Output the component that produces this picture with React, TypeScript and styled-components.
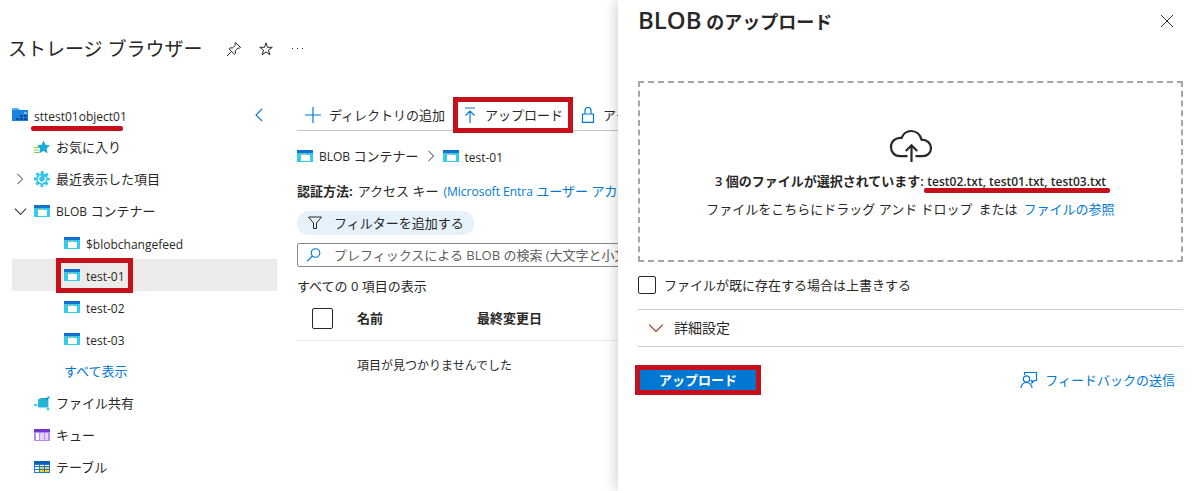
import React from "react";
import styled, { createGlobalStyle, css } from "styled-components";

const ink = "#292827";
const link = "#0078d4";
const marker = "#c50f1a";

const GlobalStyle = createGlobalStyle`
  *, *::before, *::after { box-sizing: border-box; }
  html, body, #root { min-height: 100vh; }
  body {
    margin: 0;
    background: #fff;
    color: ${ink};
    font: 13px/20px "Open Sans", "Noto Sans CJK JP", sans-serif;
  }
  button, input { font: inherit; color: inherit; }
  svg { display: block; flex: none; }
`;

const Shell = styled.div`
  display: flex;
  min-height: 100vh;
  overflow: hidden;
`;

const Page = styled.div`
  flex: 1;
  min-width: 0;
  overflow: hidden;
`;

const PageHeader = styled.header`
  display: flex;
  align-items: center;
  height: 99px;
  padding: 0 8px 2px;
  gap: 16px;
`;

const PageTitle = styled.h1`
  margin: 0 7px 0 0;
  font-size: 19px;
  font-weight: 400;
  line-height: 32px;
  white-space: nowrap;
`;

const IconButton = styled.button`
  display: flex;
  align-items: center;
  justify-content: center;
  width: 16px;
  height: 16px;
  padding: 0;
  border: 0;
  background: none;
  color: ${ink};
`;

const Latin = styled.span`
  position: relative;
  font-size: 12px;
`;

const ItemName = styled(Latin)`
  padding-top: 3px;
`;

const Columns = styled.div`
  display: flex;
  gap: 20px;
  padding-left: 12px;
`;

const Tree = styled.nav`
  flex: none;
  width: 265px;
`;

const TreeList = styled.ul`
  margin: 0;
  padding: 0;
  list-style: none;
`;

const TreeRow = styled.li<{ $level: number; $selected?: boolean }>`
  display: flex;
  align-items: center;
  gap: 6px;
  height: 32px;
  padding-left: ${(p) => (p.$level === 2 ? 52 : 0)}px;
  padding-right: 9px;
  white-space: nowrap;
  ${(p) => p.$selected && css`background: #edebe9;`}
`;

const Expander = styled.span`
  display: flex;
  justify-content: center;
  width: 16px;
`;

const Collapse = styled(IconButton)`
  margin-left: auto;
  color: ${link};
`;

const Link = styled.a`
  color: ${link};
  text-decoration: none;
`;

const MarkedItem = styled.span`
  position: relative;
  display: flex;
  align-items: center;
  gap: 6px;
`;

const MarkBox = styled.span<{ $wide?: boolean }>`
  position: absolute;
  inset: ${(p) => (p.$wide ? "-8px -10px" : "-6px -8px")};
  border: 5px solid ${marker};
  pointer-events: none;
`;

const Underline = styled.span<{ $right: number; $drop: number }>`
  position: absolute;
  left: -3px;
  right: ${(p) => p.$right}px;
  bottom: ${(p) => -p.$drop}px;
  height: 5px;
  border-radius: 2px;
  background: ${marker};
`;

const Content = styled.main`
  flex: 1;
  min-width: 0;
  white-space: nowrap;
`;

const Toolbar = styled.div`
  display: flex;
  align-items: center;
  gap: 18px;
  height: 32px;
  padding-left: 8px;
  border-bottom: 1px solid #c8c6c4;
`;

const ToolButton = styled.button`
  position: relative;
  display: flex;
  flex: none;
  align-items: center;
  gap: 8px;
  padding: 0;
  border: 0;
  background: none;
`;

const Breadcrumb = styled.div`
  display: flex;
  align-items: center;
  gap: 6px;
  height: 50px;
`;

const AuthLine = styled.p`
  display: flex;
  gap: 5px;
  margin: 0;
  height: 30px;
`;

const FilterButton = styled.button`
  display: flex;
  align-items: center;
  gap: 11px;
  height: 24px;
  padding: 0 10px;
  border: 0;
  border-radius: 12px;
  background: #e5f1fb;
`;

const SearchBox = styled.label`
  display: flex;
  align-items: center;
  gap: 12px;
  width: 420px;
  height: 24px;
  margin: 8px 0;
  padding-left: 8px;
  border: 1px solid #8a8886;
  border-radius: 2px;
`;

const SearchInput = styled.input`
  flex: 1;
  min-width: 0;
  height: 20px;
  padding: 0;
  border: 0;
  outline: 0;
  background: none;
  &::placeholder { color: #605e5c; opacity: 1; }
`;

const Count = styled.p`
  margin: 0;
  line-height: 22px;
`;

const Table = styled.table`
  width: 100%;
  border-collapse: collapse;
  table-layout: fixed;
  th, td { padding: 0; text-align: left; }
  thead th { height: 43px; font-weight: 600; border-bottom: 1px solid #edebe9; }
  tbody td { height: 51px; font-size: 12px; }
`;

const CheckCol = styled.col`width: 60px;`;
const NameCol = styled.col`width: 120px;`;

const Check = styled.input<{ $size: number }>`
  appearance: none;
  display: block;
  flex: none;
  width: ${(p) => p.$size}px;
  height: ${(p) => p.$size}px;
  margin: 0;
  border: 1px solid ${ink};
  border-radius: 2px;
  background: #fff;
`;

const HeaderCheck = styled(Check)`
  margin-left: 15px;
`;

const Panel = styled.aside`
  position: relative;
  flex: none;
  width: 574px;
  padding: 0 9px 0 20px;
  background: #fff;
  box-shadow: 0 0 14px rgba(0, 0, 0, 0.24);
`;

const PanelHeader = styled.header`
  display: flex;
  align-items: center;
  justify-content: space-between;
  height: 41px;
  padding-right: 8px;
`;

const PanelTitle = styled.h2`
  margin: 0;
  font-size: 18px;
  font-weight: 600;
  line-height: 32px;
`;

const ProductName = styled.span`
  font-size: 24px;
`;

const DropZone = styled.section`
  display: flex;
  flex-direction: column;
  align-items: center;
  height: 181px;
  margin-top: 40px;
  padding-top: 45px;
  border: 2px dashed #a6a6a6;
  white-space: nowrap;
`;

const Selected = styled.p`
  margin: 7px 0;
  font-weight: 600;
`;

const DropHint = styled.p`
  display: flex;
  gap: 6px;
  margin: 0;
`;

const Overwrite = styled.label`
  display: flex;
  align-items: center;
  gap: 8px;
  height: 47px;
  padding-bottom: 2px;
`;

const Advanced = styled.button`
  display: flex;
  align-items: center;
  gap: 10px;
  width: 100%;
  height: 38px;
  padding: 0 10px;
  border: solid #d2d0ce;
  border-width: 1px 0;
  background: none;
  font-size: 14px;
`;

const PanelFooter = styled.footer`
  display: flex;
  align-items: center;
  justify-content: space-between;
  margin-top: 23px;
  padding: 0 8px 0 2px;
`;

const Submit = styled.button`
  width: 116px;
  height: 20px;
  padding: 0;
  border: 0;
  outline: 5px solid ${marker};
  background: ${link};
  color: #fff;
  font-weight: 600;
  line-height: 20px;
`;

const Feedback = styled(Link)`
  display: flex;
  align-items: center;
  gap: 7px;
`;

type ChevronProps = { d: "left" | "right" | "down"; size: number; color?: string };

const Chevron = ({ d, size, color = "currentColor" }: ChevronProps) => {
  const path = { left: "M9 1 3 7l6 6", right: "M4 1l6 6-6 6", down: "M1 4l6 6 6-6" }[d];
  return (
    <svg width={size} height={size} viewBox="0 0 14 14" fill="none" stroke={color} strokeWidth="1.1">
      <path d={path} />
    </svg>
  );
};

const ContainerIcon = () => (
  <svg width="16" height="16" viewBox="0 0 16 16">
    <path fill="#35cdee" d="M0 2h16v12H0z" />
    <path fill="#0f74d0" d="M0 2h16v3H0z" />
    <path fill="#fff" d="M4 6h4l1 1h4v6H4z" />
    <path fill="#f5a45a" d="M4 6h4v1H4z" />
  </svg>
);

const StorageIcon = () => (
  <svg width="16" height="16" viewBox="0 0 16 16">
    <path fill="#50b5f0" d="M0 1h6l2 2h8v3H0z" />
    <path fill="#1b83df" d="M0 3h16v11H0z" />
    <path fill="#0a4a96" d="M4 11h3v2H4zM8 11h3v2H8zM12 11h3v2h-3zM8 8h3v2H8z" />
    <path fill="#6cc4f5" d="M12 5h3v2h-3z" />
    <path fill="#0a4a96" d="M12 8h3v2h-3z" />
  </svg>
);

const FavoriteIcon = () => (
  <svg width="16" height="16" viewBox="0 0 16 16">
    <path stroke="#86c93c" d="M0 8.500h5M0 11h5M0 13.500h5" />
    <path fill="#1eaad6" d="m9.500 1.500 2 4.200 4.500.6-3.300 3.200.8 4.700-4-2.200-4.200 2.200.8-4.700L3 6.300l4.500-.6z" />
  </svg>
);

const RecentIcon = () => (
  <svg width="16" height="16" viewBox="0 0 16 16" fill="none">
    <circle cx="8" cy="8" r="6.600" stroke="#32bfe8" strokeWidth="2.600" strokeDasharray="2.700 2.484" strokeDashoffset="1.350" />
    <circle cx="8" cy="8" r="5.900" fill="#32c5ec" />
    <path d="M5.200 5.800a3.500 3.500 0 1 0 5.800.2M5 5.200h2" stroke="#fff" strokeWidth="1.300" />
  </svg>
);

const ShareIcon = () => (
  <svg width="16" height="16" viewBox="0 0 16 16">
    <path stroke="#50d0f0" d="M2 10h4M14 3v10" />
    <path fill="#27b4d8" d="M4 5q0-1 1-1l2-1h6q1 0 1 1v7q0 1.500-1.500 1.500h-7Q4 12.500 4 11z" />
    <path fill="#1680b0" d="M8 3h6v3l-2-2z" />
    <g fill="#40cdf2">
      <circle cx="1.500" cy="10" r="1.500" />
      <circle cx="14.500" cy="2.500" r="1.500" />
      <circle cx="14" cy="14" r="1.500" />
    </g>
  </svg>
);

const QueueIcon = () => (
  <svg width="16" height="16" viewBox="0 0 16 16">
    <path fill="#b58af5" d="M0 2h16v12H0z" />
    <path fill="#7434d0" d="M0 2h16v3H0z" />
    <path fill="#fff" d="M2 6h3v7H2z" />
    <path fill="#e3d2fd" d="M6 6h4v7H6zM11 6h3v7h-3z" />
  </svg>
);

const TableIcon = () => (
  <svg width="16" height="16" viewBox="0 0 16 16">
    <path fill="#187cd6" d="M0 2h16v12H0z" />
    <path fill="#0a62b8" d="M0 2h16v3H0z" />
    <path fill="#fff" d="M1 6h4v1H1zM6 6h4v1H6zM11 6h4v1h-4zM1 8h4v2H1zM1 11h4v2H1z" />
    <path fill="#f5d52c" d="M6 8h4v2H6zM11 8h4v2h-4zM6 11h4v2H6zM11 11h4v2h-4z" />
  </svg>
);

const PinIcon = () => (
  <svg width="16" height="16" viewBox="0 0 16 16" fill="none" stroke="currentColor">
    <path d="m9.500 1.500 5 5-1.200.7-1.300-.2-2.800 2.800.3 2.500-1 1L3 7.800l1-1 2.500.3L9.200 4.300 9 3zM5.500 10.500 1 15" />
  </svg>
);

const StarIcon = () => (
  <svg width="16" height="16" viewBox="0 0 16 16" fill="none" stroke="currentColor">
    <path d="m8 1.800 1.500 4.500h4.800l-3.900 2.900 1.500 4.600L8 11l-3.900 2.800 1.500-4.600-3.900-2.900h4.800z" />
  </svg>
);

const MoreIcon = () => (
  <svg width="16" height="16" viewBox="0 0 16 16" fill="currentColor">
    <path d="M2 7h1v1H2zM7 7h1v1H7zM12 7h1v1h-1z" />
  </svg>
);

const PlusIcon = () => (
  <svg width="16" height="16" viewBox="0 0 16 16" stroke={link} strokeWidth="1.200">
    <path d="M8 0v16M0 8h16" />
  </svg>
);

const UploadIcon = () => (
  <svg width="14" height="16" viewBox="0 0 14 16" fill="none" stroke={link} strokeWidth="1.200">
    <path d="M2 1h10M7 16V4M2.500 8.500 7 4l4.500 4.500" />
  </svg>
);

const LockIcon = () => (
  <svg width="14" height="16" viewBox="0 0 14 16" fill="none" stroke={link} strokeWidth="1.200">
    <path d="M1.500 7h11v8.400h-11zM4 7V3.500a3 3 0 0 1 6 0V7" />
  </svg>
);

const FilterIcon = () => (
  <svg width="16" height="16" viewBox="0 0 16 16" fill="none" stroke={ink}>
    <path d="M1.500 2h13l-5 6v5.500h-3V8z" />
  </svg>
);

const SearchIcon = () => (
  <svg width="16" height="16" viewBox="0 0 16 16" fill="none" stroke={link} strokeWidth="1.100">
    <circle cx="9.500" cy="6" r="4.300" />
    <path d="M6.400 9 1 14.400" />
  </svg>
);

const CloseIcon = () => (
  <svg width="14" height="14" viewBox="0 0 14 14" stroke={ink}>
    <path d="m1 1 12 12M13 1 1 13" />
  </svg>
);

const CloudIcon = () => (
  <svg width="44" height="36" viewBox="0 0 44 36" fill="none" stroke={ink} strokeWidth="2.200">
    <path d="M18.500 28.200H11C5 28.200 2 23.500 2 19c0-5.500 4.500-9.700 10.500-9C14.500 5.200 18 3 22.200 3c5 0 9 3.500 10.300 8.700 5.700 0 9.500 3.600 9.500 8.300s-3.500 8.200-8.500 8.200h-7" />
    <path d="M22.500 34V17.500M16.800 23l5.700-5.700 5.700 5.700" />
  </svg>
);

const FeedbackIcon = () => (
  <svg width="18" height="18" viewBox="0 0 18 18" fill="none" stroke={link} strokeWidth="1.200">
    <path d="M4.500 4V1.500h12v8h-2l-2.500 2.300V9.500h-1.500" />
    <circle cx="6.500" cy="8" r="3.200" />
    <path d="M1 17a5.500 5.500 0 0 1 11 0" />
  </svg>
);

type BranchProps = { icon: React.ReactNode; children: React.ReactNode; open?: "right" | "down" };

const Branch = ({ icon, children, open }: BranchProps) => (
  <TreeRow $level={1}>
    <Expander>{open && <Chevron d={open} size={open === "down" ? 13 : 12} />}</Expander>
    {icon}
    <span>{children}</span>
  </TreeRow>
);

const Leaf = ({ label, selected }: { label: string; selected?: boolean }) => (
  <TreeRow $level={2} $selected={selected}>
    <MarkedItem>
      <ContainerIcon />
      <ItemName>{label}</ItemName>
      {selected && <MarkBox />}
    </MarkedItem>
  </TreeRow>
);

export default function App() {
  return (
    <Shell>
      <GlobalStyle />
      <Page>
        <PageHeader>
          <PageTitle>ストレージ ブラウザー</PageTitle>
          <IconButton aria-label="ピン留め"><PinIcon /></IconButton>
          <IconButton aria-label="お気に入りに追加"><StarIcon /></IconButton>
          <IconButton aria-label="その他"><MoreIcon /></IconButton>
        </PageHeader>
        <Columns>
          <Tree>
            <TreeList>
              <TreeRow $level={0}>
                <StorageIcon />
                <ItemName>sttest01object01<Underline $right={4} $drop={4} /></ItemName>
                <Collapse aria-label="折りたたむ"><Chevron d="left" size={14} /></Collapse>
              </TreeRow>
              <Branch icon={<FavoriteIcon />}>お気に入り</Branch>
              <Branch icon={<RecentIcon />} open="right">最近表示した項目</Branch>
              <Branch icon={<ContainerIcon />} open="down"><Latin>BLOB</Latin> コンテナー</Branch>
              <Leaf label="$blobchangefeed" />
              <Leaf label="test-01" selected />
              <Leaf label="test-02" />
              <Leaf label="test-03" />
              <TreeRow $level={2}><Link href="#all">すべて表示</Link></TreeRow>
              <Branch icon={<ShareIcon />}>ファイル共有</Branch>
              <Branch icon={<QueueIcon />}>キュー</Branch>
              <Branch icon={<TableIcon />}>テーブル</Branch>
            </TreeList>
          </Tree>
          <Content>
            <Toolbar>
              <ToolButton><PlusIcon />ディレクトリの追加</ToolButton>
              <ToolButton><UploadIcon />アップロード<MarkBox $wide /></ToolButton>
              <ToolButton><LockIcon />アクセス レベルを変更する</ToolButton>
            </Toolbar>
            <Breadcrumb>
              <ContainerIcon />
              <span><Latin>BLOB</Latin> コンテナー</span>
              <Chevron d="right" size={12} />
              <ContainerIcon />
              <ItemName>test-01</ItemName>
            </Breadcrumb>
            <AuthLine>
              <b>認証方法:</b>
              <span>アクセス キー</span>
              <Link href="#auth"><Latin>(Microsoft Entra</Latin> ユーザー アカウントに切り替える)</Link>
            </AuthLine>
            <FilterButton><FilterIcon />フィルターを追加する</FilterButton>
            <SearchBox>
              <SearchIcon />
              <SearchInput aria-label="検索" placeholder="プレフィックスによる BLOB の検索 (大文字と小文字を区別)" />
            </SearchBox>
            <Count>すべての 0 項目の表示</Count>
            <Table>
              <colgroup><CheckCol /><NameCol /><col /></colgroup>
              <thead>
                <tr>
                  <th><HeaderCheck type="checkbox" $size={21} aria-label="すべて選択" /></th>
                  <th>名前</th>
                  <th>最終変更日</th>
                </tr>
              </thead>
              <tbody>
                <tr><td /><td colSpan={2}>項目が見つかりませんでした</td></tr>
              </tbody>
            </Table>
          </Content>
        </Columns>
      </Page>
      <Panel>
        <PanelHeader>
          <PanelTitle><ProductName>BLOB</ProductName> のアップロード</PanelTitle>
          <IconButton aria-label="閉じる"><CloseIcon /></IconButton>
        </PanelHeader>
        <DropZone>
          <CloudIcon />
          <Selected>
            3 個のファイルが選択されています:{" "}
            <Latin>test02.txt, test01.txt, test03.txt<Underline $right={-4} $drop={3} /></Latin>
          </Selected>
          <DropHint>
            <span>ファイルをこちらにドラッグ アンド ドロップ</span>
            <span>または</span>
            <Link href="#browse">ファイルの参照</Link>
          </DropHint>
        </DropZone>
        <Overwrite>
          <Check type="checkbox" $size={18} />
          ファイルが既に存在する場合は上書きする
        </Overwrite>
        <Advanced><Chevron d="down" size={16} color="#8a4b2a" />詳細設定</Advanced>
        <PanelFooter>
          <Submit>アップロード</Submit>
          <Feedback href="#feedback"><FeedbackIcon />フィードバックの送信</Feedback>
        </PanelFooter>
      </Panel>
    </Shell>
  );
}
